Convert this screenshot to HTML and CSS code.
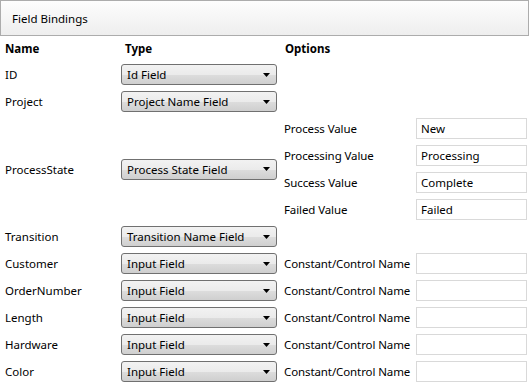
FILE: index.html
```html
<!DOCTYPE html>
<html lang="en">
<head>
<meta charset="UTF-8">
<title>Field Bindings</title>
<link rel="stylesheet" href="styles.css">
</head>
<body>
<!-- Panel title -->
<div class="panel-header">Field Bindings</div>

<!-- Bindings grid -->
<div class="bindings">
    <div class="col-head name">Name</div>
    <div class="col-head">Type</div>
    <div class="col-head options-head">Options</div>

    <div class="name">ID</div>
    <div class="type"><div class="select"><span>Id Field</span><svg width="7" height="4" viewBox="0 0 7 4"><path d="M0 0H7L3.5 4Z"/></svg></div></div>
    <div class="empty"></div>

    <div class="name">Project</div>
    <div class="type"><div class="select"><span>Project Name Field</span><svg width="7" height="4" viewBox="0 0 7 4"><path d="M0 0H7L3.5 4Z"/></svg></div></div>
    <div class="empty"></div>

    <div class="name span4">ProcessState</div>
    <div class="type span4"><div class="select"><span>Process State Field</span><svg width="7" height="4" viewBox="0 0 7 4"><path d="M0 0H7L3.5 4Z"/></svg></div></div>
    <div class="opt-label">Process Value</div>
    <div class="opt-input"><input type="text" value="New"></div>
    <div class="opt-label">Processing Value</div>
    <div class="opt-input"><input type="text" value="Processing"></div>
    <div class="opt-label">Success Value</div>
    <div class="opt-input"><input type="text" value="Complete"></div>
    <div class="opt-label">Failed Value</div>
    <div class="opt-input"><input type="text" value="Failed"></div>

    <div class="name">Transition</div>
    <div class="type"><div class="select"><span>Transition Name Field</span><svg width="7" height="4" viewBox="0 0 7 4"><path d="M0 0H7L3.5 4Z"/></svg></div></div>
    <div class="empty"></div>

    <div class="name">Customer</div>
    <div class="type"><div class="select"><span>Input Field</span><svg width="7" height="4" viewBox="0 0 7 4"><path d="M0 0H7L3.5 4Z"/></svg></div></div>
    <div class="opt-label">Constant/Control Name</div>
    <div class="opt-input"><input type="text" value=""></div>

    <div class="name">OrderNumber</div>
    <div class="type"><div class="select"><span>Input Field</span><svg width="7" height="4" viewBox="0 0 7 4"><path d="M0 0H7L3.5 4Z"/></svg></div></div>
    <div class="opt-label">Constant/Control Name</div>
    <div class="opt-input"><input type="text" value=""></div>

    <div class="name">Length</div>
    <div class="type"><div class="select"><span>Input Field</span><svg width="7" height="4" viewBox="0 0 7 4"><path d="M0 0H7L3.5 4Z"/></svg></div></div>
    <div class="opt-label">Constant/Control Name</div>
    <div class="opt-input"><input type="text" value=""></div>

    <div class="name">Hardware</div>
    <div class="type"><div class="select"><span>Input Field</span><svg width="7" height="4" viewBox="0 0 7 4"><path d="M0 0H7L3.5 4Z"/></svg></div></div>
    <div class="opt-label">Constant/Control Name</div>
    <div class="opt-input"><input type="text" value=""></div>

    <div class="name">Color</div>
    <div class="type"><div class="select"><span>Input Field</span><svg width="7" height="4" viewBox="0 0 7 4"><path d="M0 0H7L3.5 4Z"/></svg></div></div>
    <div class="opt-label">Constant/Control Name</div>
    <div class="opt-input"><input type="text" value=""></div>
</div>
</body>
</html>
```
FILE: styles.css
```css
body {
    margin: 0;
    font-family: 'Noto Sans', 'Open Sans', sans-serif;
    font-size: 11.5px;
    color: #000;
    background: #fff;
}

/* Panel title bar */
.panel-header {
    box-sizing: border-box;
    width: 529px;
    height: 36px;
    padding-left: 11px;
    display: flex;
    align-items: center;
    border: 1px solid #acacac;
    background: linear-gradient(#fdfdfd, #eeeeee);
}

/* Grid of bindings */
.bindings {
    display: grid;
    grid-template-columns: 121px 163px 132px 111px;
    grid-template-rows: 25px;
    grid-auto-rows: 27px;
}

.bindings > div {
    display: flex;
    align-items: center;
    white-space: nowrap;
}

.col-head {
    font-weight: bold;
    padding-left: 4px;
}

.col-head.name {
    padding-left: 5px;
}

.options-head {
    grid-column: span 2;
    padding-left: 1px;
}

.name {
    padding-left: 5px;
}

.span4 {
    grid-row: span 4;
}

.empty {
    grid-column: span 2;
}

.opt-label {
    letter-spacing: -0.1px;
}

/* Fake drop-down */
.select {
    box-sizing: border-box;
    width: 156px;
    height: 21px;
    padding: 0 6px 0 5px;
    display: flex;
    align-items: center;
    justify-content: space-between;
    border: 1px solid #707070;
    border-radius: 3px;
    background: linear-gradient(#f2f2f2 0%, #ebebeb 50%, #dddddd 51%, #cfcfcf 100%);
}

.select svg {
    fill: #000;
}

.opt-input input {
    box-sizing: border-box;
    width: 111px;
    height: 21px;
    padding: 0 4px;
    border: 1px solid #d9d9d9;
    font-family: inherit;
    font-size: 11.5px;
    color: #000;
}
```
